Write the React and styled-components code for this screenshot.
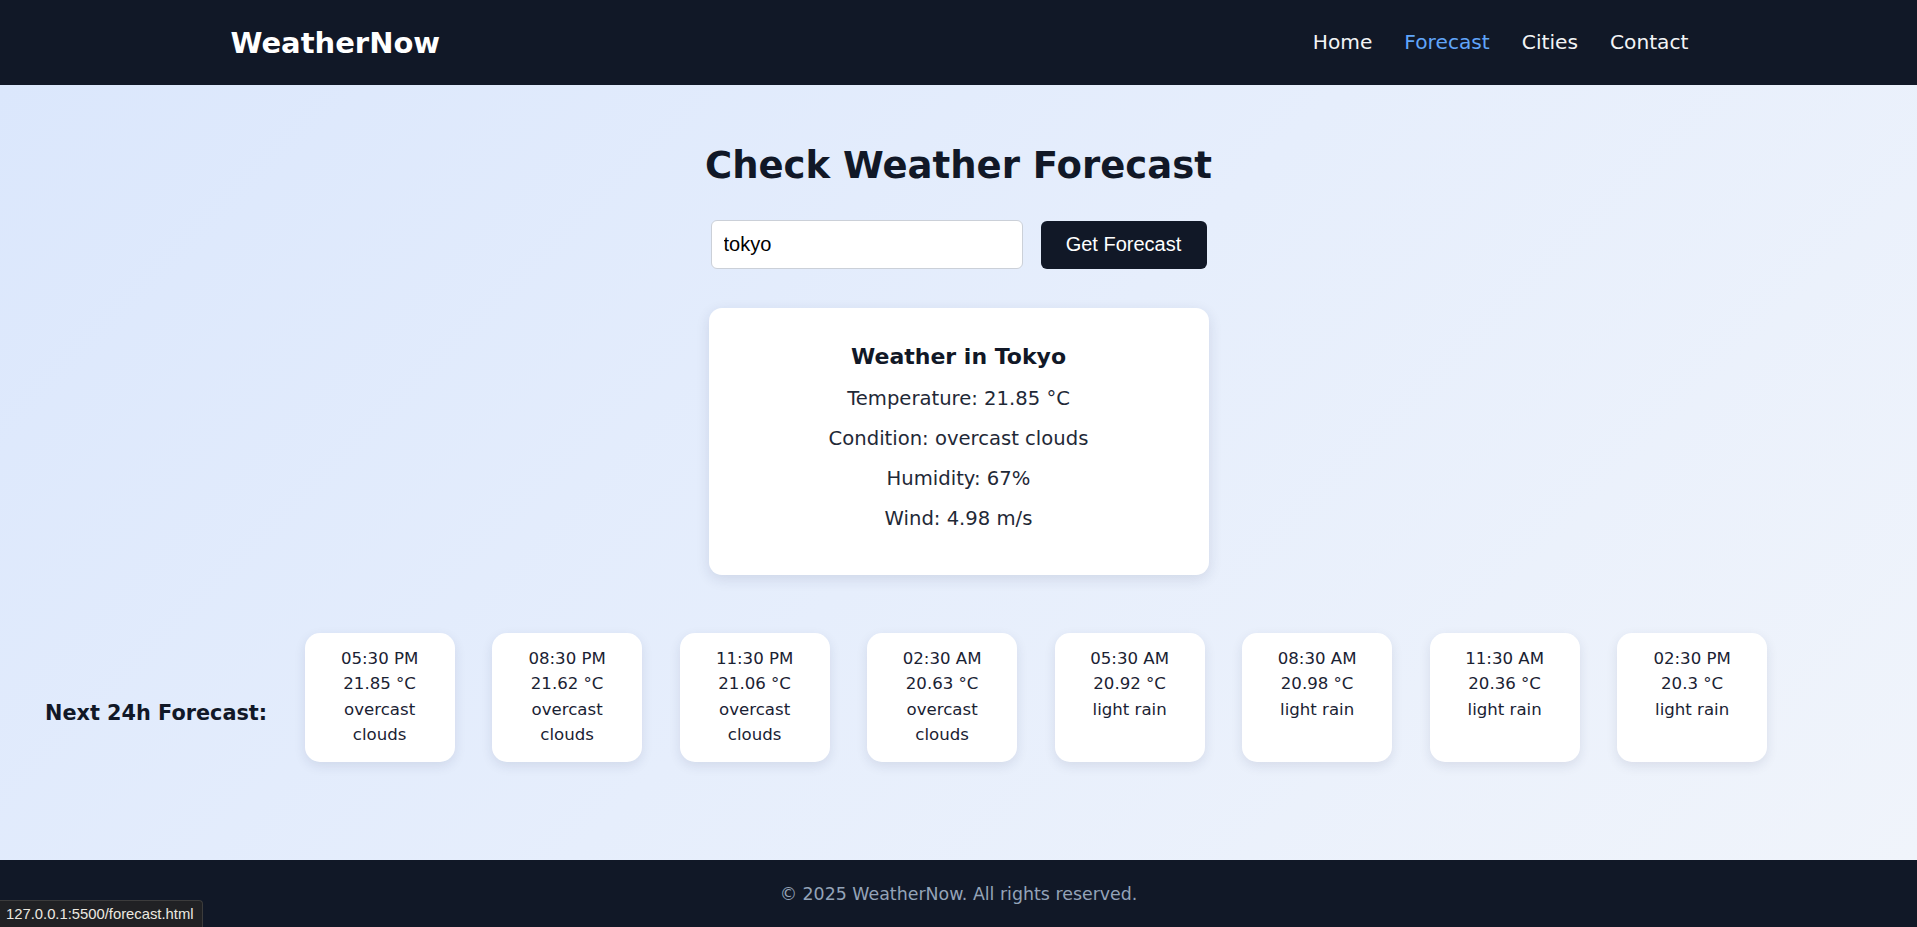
import React from "react";
import styled, { createGlobalStyle } from "styled-components";

const GlobalStyle = createGlobalStyle`
  html, body { margin: 0; padding: 0; }
  body {
    font-family: "DejaVu Sans", "Noto Sans", sans-serif;
    color: #111827;
  }
  * { box-sizing: border-box; }
`;

const Page = styled.div`
  min-height: 100vh;
  display: flex;
  flex-direction: column;
`;

const Header = styled.header`
  height: 85px;
  background: #111827;
  display: flex;
  align-items: center;
`;

const HeaderInner = styled.div`
  width: 100%;
  max-width: 1460px;
  margin: 0 auto;
  display: flex;
  align-items: center;
  justify-content: space-between;
`;

const Logo = styled.div`
  color: #ffffff;
  font-weight: 700;
  font-size: 29px;
  line-height: 40px;
  margin-left: 2px;
`;

const Nav = styled.nav`
  display: flex;
  align-items: center;
  gap: 32px;
  margin-top: -1px;
`;

const NavLink = styled.a`
  color: ${(p) => (p.$active ? "#60a5fa" : "#f3f4f6")};
  text-decoration: none;
  font-size: 20.2px;
  line-height: 30px;
`;

const Main = styled.main`
  flex: 1;
  display: flex;
  flex-direction: column;
  align-items: center;
  padding-top: 59px;
  background: linear-gradient(135deg, #dbe7fc 0%, #e6eefc 50%, #f0f4fb 100%);
`;

const Title = styled.h1`
  margin: 0;
  font-size: 37px;
  line-height: 44px;
  font-weight: 700;
  color: #111827;
`;

const SearchForm = styled.form`
  margin-top: 32px;
  display: flex;
  align-items: center;
  gap: 18px;
`;

const CityInput = styled.input`
  width: 312px;
  height: 49px;
  padding: 0 12px;
  border: 1px solid #cbd0d8;
  border-radius: 6px;
  background: #ffffff;
  font-family: "Liberation Sans", Arial, sans-serif;
  font-size: 20px;
  color: #000000;
  outline: none;
`;

const SubmitButton = styled.button`
  width: 166px;
  height: 48px;
  border: none;
  border-radius: 6px;
  background: #111827;
  color: #ffffff;
  font-family: "Liberation Sans", Arial, sans-serif;
  font-size: 20px;
  cursor: pointer;
`;

const WeatherCard = styled.section`
  margin-top: 39px;
  width: 500px;
  background: #ffffff;
  border-radius: 13px;
  box-shadow: 0 4px 14px rgba(30, 41, 80, 0.12);
  padding: 34px 20px 36px;
  display: flex;
  flex-direction: column;
  align-items: center;
`;

const CardTitle = styled.h2`
  margin: 0 0 7px;
  font-size: 22px;
  line-height: 30px;
  font-weight: 700;
  color: #111827;
`;

const CardLine = styled.p`
  margin: 0;
  font-size: 19.6px;
  line-height: 40px;
  color: #1f2937;
`;

const ForecastRow = styled.section`
  align-self: stretch;
  margin-top: 58px;
  padding-left: 45px;
  display: flex;
  align-items: center;
  gap: 37.5px;
`;

const ForecastLabel = styled.h3`
  margin: 30px 0 0;
  font-size: 20.8px;
  line-height: 30px;
  font-weight: 700;
  color: #111827;
  white-space: nowrap;
`;

const ForecastCard = styled.div`
  width: 150px;
  align-self: stretch;
  background: #ffffff;
  border-radius: 15px;
  box-shadow: 0 4px 12px rgba(30, 41, 80, 0.1);
  padding: 13px 15px 15px;
  text-align: center;
`;

const ForecastLine = styled.div`
  font-size: 16.6px;
  line-height: 25.3px;
  color: #1a2233;
`;

const Footer = styled.footer`
  height: 67px;
  background: #111827;
  display: flex;
  align-items: center;
  justify-content: center;
`;

const FooterText = styled.p`
  margin: 0;
  font-size: 17.4px;
  color: #94a3b8;
`;

const StatusBubble = styled.div`
  position: fixed;
  left: 0;
  bottom: 0;
  height: 27px;
  padding: 0 8px 0 6px;
  display: flex;
  align-items: center;
  background: #202124;
  border: 1px solid #3c3c3c;
  border-left: none;
  border-bottom: none;
  border-top-right-radius: 4px;
  color: #ece9e0;
  font-family: "Liberation Sans", Arial, sans-serif;
  font-size: 14.8px;
`;

const forecast = [
  { time: "05:30 PM", temp: "21.85 °C", desc: "overcast clouds" },
  { time: "08:30 PM", temp: "21.62 °C", desc: "overcast clouds" },
  { time: "11:30 PM", temp: "21.06 °C", desc: "overcast clouds" },
  { time: "02:30 AM", temp: "20.63 °C", desc: "overcast clouds" },
  { time: "05:30 AM", temp: "20.92 °C", desc: "light rain" },
  { time: "08:30 AM", temp: "20.98 °C", desc: "light rain" },
  { time: "11:30 AM", temp: "20.36 °C", desc: "light rain" },
  { time: "02:30 PM", temp: "20.3 °C", desc: "light rain" },
];

export default function App() {
  return (
    <Page>
      <GlobalStyle />
      <Header>
        <HeaderInner>
          <Logo>WeatherNow</Logo>
          <Nav>
            <NavLink href="#">Home</NavLink>
            <NavLink href="#" $active>
              Forecast
            </NavLink>
            <NavLink href="#">Cities</NavLink>
            <NavLink href="#">Contact</NavLink>
          </Nav>
        </HeaderInner>
      </Header>
      <Main>
        <Title>Check Weather Forecast</Title>
        <SearchForm onSubmit={(e) => e.preventDefault()}>
          <CityInput defaultValue="tokyo" />
          <SubmitButton type="submit">Get Forecast</SubmitButton>
        </SearchForm>
        <WeatherCard>
          <CardTitle>Weather in Tokyo</CardTitle>
          <CardLine>Temperature: 21.85 °C</CardLine>
          <CardLine>Condition: overcast clouds</CardLine>
          <CardLine>Humidity: 67%</CardLine>
          <CardLine>Wind: 4.98 m/s</CardLine>
        </WeatherCard>
        <ForecastRow>
          <ForecastLabel>Next 24h Forecast:</ForecastLabel>
          {forecast.map((f) => (
            <ForecastCard key={f.time}>
              <ForecastLine>{f.time}</ForecastLine>
              <ForecastLine>{f.temp}</ForecastLine>
              <ForecastLine>{f.desc}</ForecastLine>
            </ForecastCard>
          ))}
        </ForecastRow>
      </Main>
      <Footer>
        <FooterText>© 2025 WeatherNow. All rights reserved.</FooterText>
      </Footer>
      <StatusBubble>127.0.0.1:5500/forecast.html</StatusBubble>
    </Page>
  );
}
